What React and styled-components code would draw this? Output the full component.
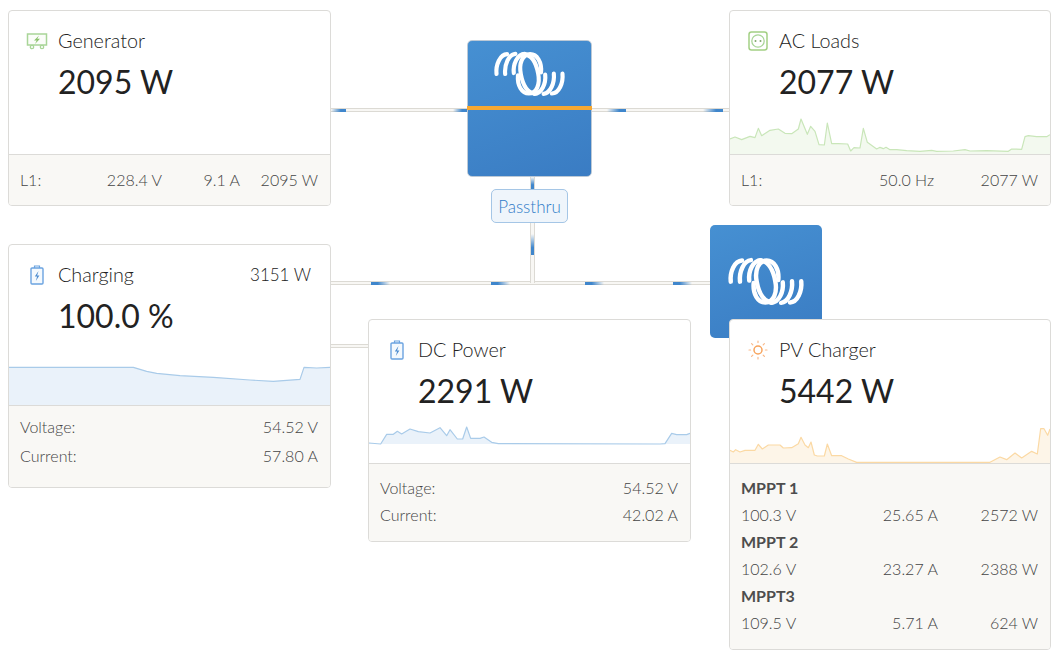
import React from "react";
import styled, { createGlobalStyle } from "styled-components";

const GlobalStyle = createGlobalStyle`
  html, body {
    margin: 0;
    background: #fff;
    font-family: "Lato", "Open Sans", sans-serif;
  }
`;

const Canvas = styled.div`
  position: relative;
  width: 1063px;
  height: 657px;
  overflow: hidden;
`;

const Card = styled.section`
  position: absolute;
  left: ${p => p.$x}px;
  top: ${p => p.$y}px;
  width: ${p => p.$w}px;
  height: ${p => p.$h}px;
  box-sizing: border-box;
  display: flex;
  flex-direction: column;
  background: #fff;
  border: 1px solid #dcdbd8;
  border-radius: 4px;
  overflow: hidden;
  z-index: 2;
`;

const Body = styled.div`
  flex: 1;
  display: flex;
  flex-direction: column;
  min-height: 0;
`;

const Header = styled.div`
  display: flex;
  align-items: center;
  justify-content: space-between;
  padding: 17px 19px 0 49px;
  position: relative;
  height: 24px;
`;

const IconSlot = styled.span`
  position: absolute;
  left: 15px;
  top: 17px;
  width: 26px;
  height: 26px;
  display: flex;
  align-items: center;
  justify-content: center;
`;

const Title = styled.span`
  font-size: 19.8px;
  font-weight: 300;
  line-height: 24px;
  color: #222;
`;

const Extra = styled.span`
  font-size: 17px;
  font-weight: 300;
  color: #222;
`;

const Value = styled.div`
  padding: 9px 0 0 49px;
  font-size: 32px;
  font-weight: 400;
  line-height: 42px;
  color: #222;
`;

const ChartWrap = styled.div`
  margin-top: auto;
  height: ${p => p.$h}px;
  line-height: 0;
`;

const Footer = styled.div`
  background: #f9f8f5;
  border-top: 1px solid #dcdbd8;
  padding: ${p => p.$pad}px 12px 0 11px;
  height: ${p => p.$h}px;
  box-sizing: border-box;
`;

const Row = styled.div`
  display: grid;
  grid-template-columns: ${p => p.$cols};
  height: ${p => p.$rowH}px;
  align-items: center;
  font-size: 16px;
  font-weight: 300;
  color: #444;
`;

const Cell = styled.span`
  text-align: ${p => (p.$left ? "left" : "right")};
`;

const RowHead = styled.div`
  height: 27px;
  line-height: 27px;
  font-size: 16px;
  font-weight: 700;
  color: #4d4d4d;
`;

const Tile = styled.div`
  position: absolute;
  left: ${p => p.$x}px;
  top: ${p => p.$y}px;
  width: ${p => p.$w}px;
  height: ${p => p.$h}px;
  box-sizing: border-box;
  border-radius: 5px;
  background: linear-gradient(160deg, #4690d2 0%, #3a7cc3 100%);
  border: ${p => (p.$outlined ? "1px solid #bcc9d6" : "none")};
  display: flex;
  justify-content: center;
  padding-top: ${p => p.$logoTop}px;
  z-index: 1;
`;

const OrangeBar = styled.div`
  position: absolute;
  left: -1px;
  right: -1px;
  top: 65px;
  height: 4px;
  background: #f6a832;
`;

const Badge = styled.div`
  position: absolute;
  left: 491px;
  top: 189px;
  width: 77px;
  height: 34px;
  box-sizing: border-box;
  display: flex;
  align-items: center;
  justify-content: center;
  background: #eff5fb;
  border: 1px solid #a5c6e6;
  border-radius: 5px;
  font-size: 17px;
  font-weight: 300;
  color: #2f7cc8;
  z-index: 1;
`;

const Wire = styled.div`
  position: absolute;
  left: ${p => p.$x}px;
  top: ${p => p.$y}px;
  width: ${p => (p.$vertical ? 5 : p.$len)}px;
  height: ${p => (p.$vertical ? p.$len : 4)}px;
  box-sizing: border-box;
  background: #f8f7f4;
  border: solid #dcdad4;
  border-width: ${p => (p.$vertical ? "0 1px" : "1px 0")};
`;

const Pulse = styled.div`
  position: absolute;
  ${p =>
    p.$vertical
      ? `left: 0; right: 0; top: ${p.$at}px; height: ${p.$len}px;`
      : `top: 0; bottom: -1px; left: ${p.$at}px; width: ${p.$len}px;`}
  background: linear-gradient(
    ${p => p.$dir},
    #3f86cc 0%,
    #3f86cc 35%,
    rgba(63, 134, 204, 0) 100%
  );
`;

const spline = pts => pts.map(p => p.join(",")).join(" ");

function Chart({ box, base, points, line, fill }) {
  const [x0, y0, w, h] = box;
  const first = points[0];
  const last = points[points.length - 1];
  const area = [[first[0], base], ...points, [last[0], base]];
  return (
    <svg width="100%" height="100%" viewBox={`${x0} ${y0} ${w} ${h}`} preserveAspectRatio="none">
      <polygon points={spline(area)} fill={fill} />
      <polyline points={spline(points)} fill="none" stroke={line} strokeWidth="3.6" strokeLinejoin="round" />
    </svg>
  );
}

function Logo({ width }) {
  const half = (
    <g>
      <path d="M109 117C106 88 120 56 142 55" />
      <path d="M136 117C133 88 147 56 168 54" />
      <path d="M163 114C160 86 174 55 197 54" />
      <path d="M248 112C251 80 236 55 214 55C190 55 178 84 185 118C191 150 206 176 230 178" />
    </g>
  );
  return (
    <svg width={width} viewBox="98 42 228 150" fill="none" stroke="#fff" strokeWidth="13" strokeLinecap="round">
      {half}
      <g transform="rotate(180 212 116.5)">{half}</g>
    </svg>
  );
}

const GeneratorIcon = () => (
  <svg width="22" height="18" viewBox="0 0 22 18" fill="none">
    <rect x="1.5" y="2" width="19" height="11" fill="#fbfdf9" stroke="#a9d598" strokeWidth="1.5" />
    <circle cx="6" cy="15" r="1.7" stroke="#a9d598" strokeWidth="1.3" />
    <circle cx="16" cy="15" r="1.7" stroke="#a9d598" strokeWidth="1.3" />
    <path d="M13 3.6L8 8.6h2.7L9 12l5-5.2h-2.7z" fill="#8cc26e" />
  </svg>
);

const SocketIcon = () => (
  <svg width="20" height="20" viewBox="0 0 20 20" fill="none">
    <rect x="1" y="1" width="18" height="18" rx="2.5" stroke="#a3d084" strokeWidth="1.5" />
    <circle cx="10" cy="10" r="6.2" stroke="#a9d598" strokeWidth="1.3" />
    <circle cx="7.5" cy="10" r="1" fill="#7fa86a" />
    <circle cx="12.5" cy="10" r="1" fill="#7fa86a" />
  </svg>
);

const BatteryIcon = () => (
  <svg width="14" height="20" viewBox="0 0 14 20" fill="none">
    <rect x="1" y="3" width="12" height="16" rx="1" fill="#f4f9fd" stroke="#6aa3e0" strokeWidth="1.4" />
    <path d="M4.5 3V1h5v2" stroke="#6aa3e0" strokeWidth="1.2" />
    <path d="M8.5 6L4.8 11.5h2.3L5.8 16l3.6-5.6H7.1z" fill="#4d8ccf" />
  </svg>
);

const SunIcon = () => (
  <svg width="20" height="20" viewBox="0 0 20 20" fill="none" stroke="#f7a35c" strokeLinecap="round">
    <circle cx="10" cy="10" r="4" strokeWidth="1.5" />
    <g strokeWidth="1.2" stroke="#f9b98a">
      <path d="M10 1v1.6M10 17.4V19M1 10h1.6M17.4 10H19M3.6 3.6l1.2 1.2M15.2 15.2l1.2 1.2M3.6 16.4l1.2-1.2M15.2 4.8l1.2-1.2" />
    </g>
  </svg>
);

const green = { line: "#c9e6b9", fill: "#f3f9ef" };
const blue = { line: "#a9cbe9", fill: "#eaf2fa" };
const orange = { line: "#fbd9a4", fill: "#fdf5e8" };

const acPoints = [[30,418],[45,412],[65,420],[90,410],[105,414],[115,386],[125,408],[150,392],[175,388],[195,401],[215,402],[235,388],[243,358],[262,404],[272,380],[285,395],[297,435],[313,436],[322,370],[335,432],[355,432],[383,433],[392,454],[402,444],[420,445],[430,386],[442,428],[470,448],[480,443],[490,447],[498,443],[510,450],[530,450],[560,453],[600,455],[635,452],[650,455],[700,454],[735,450],[750,454],[800,453],[865,455],[875,448],[905,449],[915,411],[925,408],[950,411],[980,411],[990,405]];
const chargingPoints = [[27,382],[400,382],[440,394],[470,400],[540,407],[640,412],[750,420],[820,424],[900,418],[912,382],[950,384],[990,382]];
const dcPoints = [[27,400],[62,403],[80,374],[100,374],[112,365],[125,373],[150,358],[175,366],[210,370],[240,354],[260,378],[270,360],[292,388],[308,388],[320,352],[332,386],[360,386],[372,382],[395,398],[415,402],[900,403],[915,402],[935,371],[950,375],[980,375],[990,371]];
const pvPoints = [[90,692],[100,697],[107,690],[120,697],[135,692],[165,692],[175,674],[187,688],[205,676],[240,676],[250,685],[275,684],[295,672],[303,653],[315,676],[325,684],[333,667],[343,706],[352,709],[373,709],[382,673],[395,708],[425,708],[445,718],[470,728],[870,728],[900,712],[920,720],[945,700],[965,715],[995,695],[1012,703],[1022,627],[1032,627],[1043,647],[1050,628]];

const wires = [
  { x: 331, y: 108, len: 136, pulses: [{ at: 0, len: 15, dir: "to left" }, { at: 122, len: 14, dir: "to left" }] },
  { x: 592, y: 108, len: 137, pulses: [{ at: 15, len: 19, dir: "to left" }, { at: 111, len: 20, dir: "to left" }] },
  { x: 331, y: 281, len: 379, pulses: [{ at: 40, len: 19, dir: "to right" }, { at: 160, len: 19, dir: "to right" }, { at: 254, len: 19, dir: "to right" }, { at: 342, len: 19, dir: "to right" }] },
  { x: 331, y: 344, len: 37, pulses: [] },
  { x: 530, y: 177, len: 12, vertical: true, pulses: [{ at: 0, len: 12, dir: "to top" }] },
  { x: 530, y: 223, len: 60, vertical: true, pulses: [{ at: 11, len: 21, dir: "to top" }] },
];

export default function App() {
  return (
    <Canvas>
      <GlobalStyle />

      {wires.map(w => (
        <Wire key={`${w.x}-${w.y}`} $x={w.x} $y={w.y} $len={w.len} $vertical={w.vertical}>
          {w.pulses.map(p => (
            <Pulse key={p.at} $at={p.at} $len={p.len} $dir={p.dir} $vertical={w.vertical} />
          ))}
        </Wire>
      ))}

      <Tile $x={467} $y={40} $w={125} $h={137} $logoTop={9} $outlined>
        <div><Logo width={73} /></div>
        <OrangeBar />
      </Tile>
      <Badge>Passthru</Badge>
      <Tile $x={710} $y={225} $w={112} $h={113} $logoTop={31}>
        <div><Logo width={78} /></div>
      </Tile>

      <Card $x={8} $y={10} $w={323} $h={196}>
        <Body>
          <Header>
            <IconSlot><GeneratorIcon /></IconSlot>
            <Title>Generator</Title>
          </Header>
          <Value>2095 W</Value>
        </Body>
        <Footer $h={51} $pad={10}>
          <Row $cols="1fr 78px 78px 78px" $rowH={29}>
            <Cell $left>L1:</Cell>
            <Cell>228.4 V</Cell>
            <Cell>9.1 A</Cell>
            <Cell>2095 W</Cell>
          </Row>
        </Footer>
      </Card>

      <Card $x={729} $y={10} $w={322} $h={196}>
        <Body>
          <Header>
            <IconSlot><SocketIcon /></IconSlot>
            <Title>AC Loads</Title>
          </Header>
          <Value>2077 W</Value>
          <ChartWrap $h={41}>
            <Chart box={[30, 340, 960, 123]} base={463} points={acPoints} {...green} />
          </ChartWrap>
        </Body>
        <Footer $h={51} $pad={10}>
          <Row $cols="auto 1fr 104px" $rowH={29}>
            <Cell $left>L1:</Cell>
            <Cell>50.0 Hz</Cell>
            <Cell>2077 W</Cell>
          </Row>
        </Footer>
      </Card>

      <Card $x={8} $y={244} $w={323} $h={244}>
        <Body>
          <Header>
            <IconSlot><BatteryIcon /></IconSlot>
            <Title>Charging</Title>
            <Extra>3151 W</Extra>
          </Header>
          <Value>100.0 %</Value>
          <ChartWrap $h={41}>
            <Chart box={[27, 372, 963, 123]} base={495} points={chargingPoints} {...blue} />
          </ChartWrap>
        </Body>
        <Footer $h={82} $pad={6}>
          <Row $cols="1fr auto" $rowH={29}>
            <Cell $left>Voltage:</Cell>
            <Cell>54.52 V</Cell>
          </Row>
          <Row $cols="1fr auto" $rowH={29}>
            <Cell $left>Current:</Cell>
            <Cell>57.80 A</Cell>
          </Row>
        </Footer>
      </Card>

      <Card $x={368} $y={319} $w={323} $h={223}>
        <Body>
          <Header>
            <IconSlot><BatteryIcon /></IconSlot>
            <Title>DC Power</Title>
          </Header>
          <Value>2291 W</Value>
          <ChartWrap $h={41}>
            <Chart box={[27, 337, 963, 123]} base={403} points={dcPoints} {...blue} />
          </ChartWrap>
        </Body>
        <Footer $h={78} $pad={10}>
          <Row $cols="1fr auto" $rowH={27}>
            <Cell $left>Voltage:</Cell>
            <Cell>54.52 V</Cell>
          </Row>
          <Row $cols="1fr auto" $rowH={27}>
            <Cell $left>Current:</Cell>
            <Cell>42.02 A</Cell>
          </Row>
        </Footer>
      </Card>

      <Card $x={729} $y={319} $w={322} $h={331}>
        <Body>
          <Header>
            <IconSlot><SunIcon /></IconSlot>
            <Title>PV Charger</Title>
          </Header>
          <Value>5442 W</Value>
          <ChartWrap $h={41}>
            <Chart box={[90, 607, 960, 123]} base={730} points={pvPoints} {...orange} />
          </ChartWrap>
        </Body>
        <Footer $h={186} $pad={10}>
          <RowHead>MPPT 1</RowHead>
          <Row $cols="1fr 100px 100px" $rowH={27}>
            <Cell $left>100.3 V</Cell>
            <Cell>25.65 A</Cell>
            <Cell>2572 W</Cell>
          </Row>
          <RowHead>MPPT 2</RowHead>
          <Row $cols="1fr 100px 100px" $rowH={27}>
            <Cell $left>102.6 V</Cell>
            <Cell>23.27 A</Cell>
            <Cell>2388 W</Cell>
          </Row>
          <RowHead>MPPT3</RowHead>
          <Row $cols="1fr 100px 100px" $rowH={27}>
            <Cell $left>109.5 V</Cell>
            <Cell>5.71 A</Cell>
            <Cell>624 W</Cell>
          </Row>
        </Footer>
      </Card>
    </Canvas>
  );
}
